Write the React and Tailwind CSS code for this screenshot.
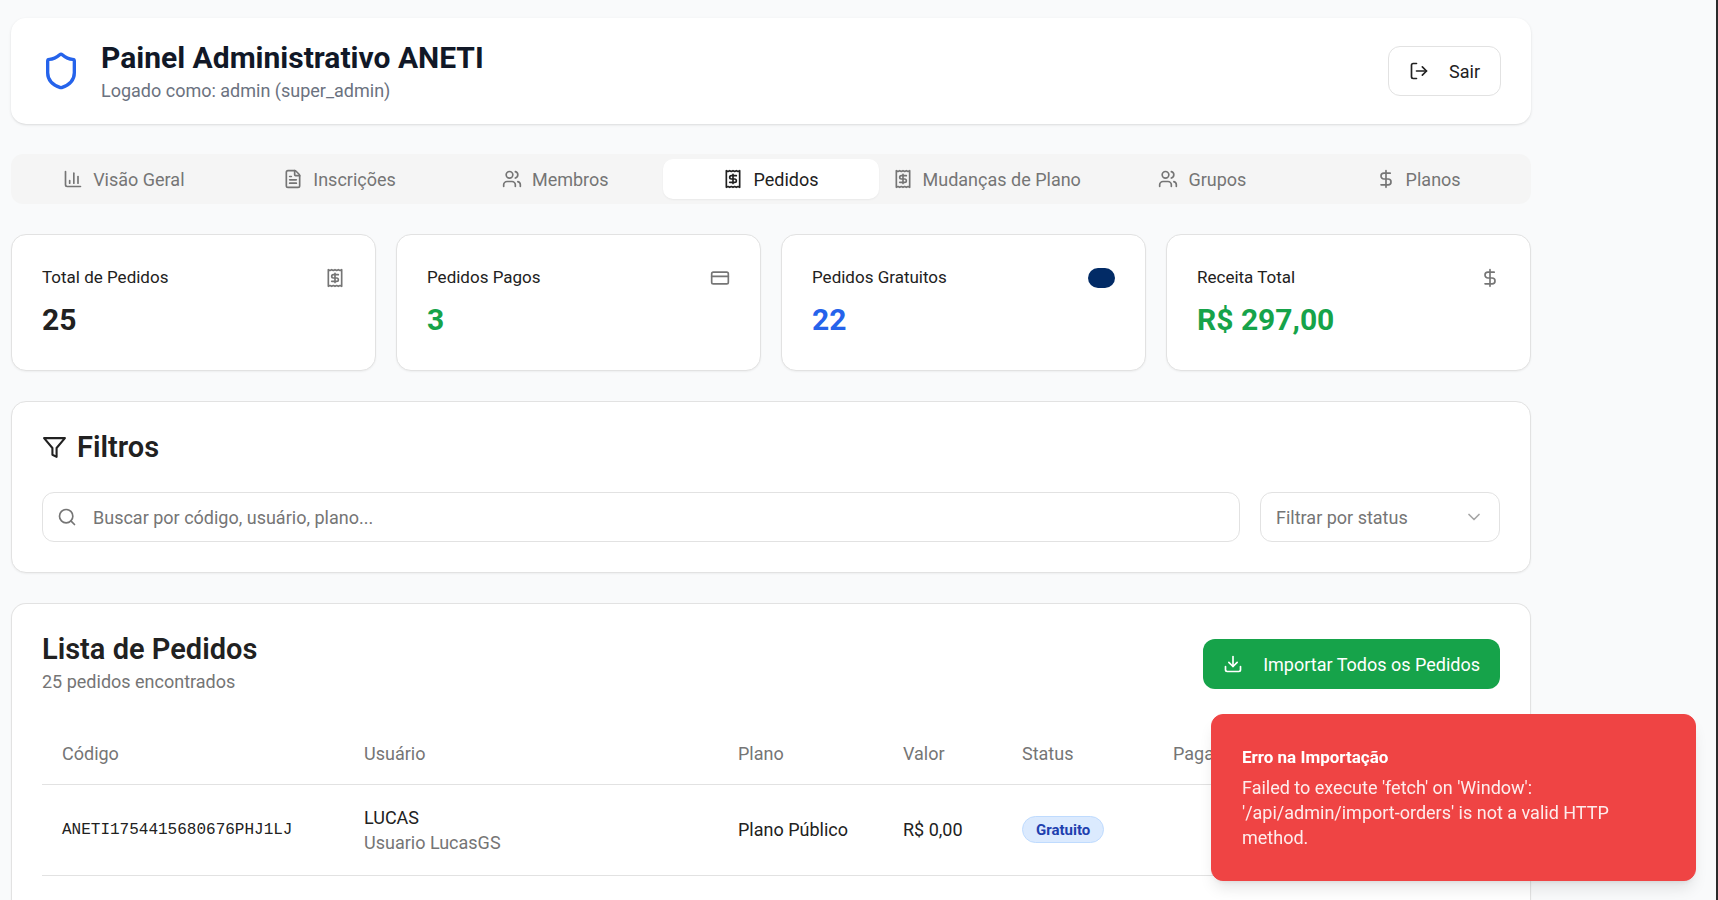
import React from "react";
import {
  Shield,
  LogOut,
  FileText,
  Users,
  Receipt,
  DollarSign,
  CreditCard,
  Search,
  ChevronDown,
} from "lucide-react";

function ChartIcon({ className }) {
  return (
    <svg viewBox="0 0 24 24" fill="none" stroke="currentColor" strokeWidth="2" strokeLinecap="round" strokeLinejoin="round" className={className} aria-hidden="true">
      <path d="M3 3v16a2 2 0 0 0 2 2h16" />
      <path d="M18 17V9" />
      <path d="M13 17V5" />
      <path d="M8 17v-3" />
    </svg>
  );
}

function FilterIcon({ className }) {
  return (
    <svg viewBox="0 0 24 24" fill="none" stroke="currentColor" strokeWidth="2" strokeLinecap="round" strokeLinejoin="round" className={className} aria-hidden="true">
      <polygon points="22 3 2 3 10 12.46 10 19 14 21 14 12.46 22 3" />
    </svg>
  );
}

function DownloadIcon({ className }) {
  return (
    <svg viewBox="0 0 24 24" fill="none" stroke="currentColor" strokeWidth="2" strokeLinecap="round" strokeLinejoin="round" className={className} aria-hidden="true">
      <path d="M21 15v4a2 2 0 0 1-2 2H5a2 2 0 0 1-2-2v-4" />
      <polyline points="7 10 12 15 17 10" />
      <line x1="12" x2="12" y1="15" y2="3" />
    </svg>
  );
}

const tabs = [
  { label: "Visão Geral", Icon: ChartIcon },
  { label: "Inscrições", Icon: FileText },
  { label: "Membros", Icon: Users },
  { label: "Pedidos", Icon: Receipt, active: true },
  { label: "Mudanças de Plano", Icon: Receipt },
  { label: "Grupos", Icon: Users },
  { label: "Planos", Icon: DollarSign },
];

const stats = [
  { label: "Total de Pedidos", value: "25", color: "text-[#212121]", Icon: Receipt },
  { label: "Pedidos Pagos", value: "3", color: "text-[#16a34a]", Icon: CreditCard },
  { label: "Pedidos Gratuitos", value: "22", color: "text-[#2563eb]" },
  { label: "Receita Total", value: "R$ 297,00", color: "text-[#16a34a]", Icon: DollarSign },
];

const columns = [
  { label: "Código", width: "w-[302px]" },
  { label: "Usuário", width: "w-[374px]" },
  { label: "Plano", width: "w-[165px]" },
  { label: "Valor", width: "w-[119px]" },
  { label: "Status", width: "w-[151px]" },
  { label: "Pagamento", width: "" },
];

function Header() {
  return (
    <header className="flex items-center justify-between rounded-[15px] bg-white px-[30px] py-5 shadow-sm">
      <div className="flex items-center gap-5">
        <Shield className="size-10 text-[#2563eb]" />
        <div>
          <h1 className="text-[30px] leading-10 font-bold text-[#111827]">Painel Administrativo ANETI</h1>
          <p className="leading-[26px] text-[#6b7280]">Logado como: admin (super_admin)</p>
        </div>
      </div>
      <button type="button" className="flex h-[50px] items-center gap-5 rounded-xl border border-[#e2e2e2] bg-white px-5">
        <LogOut className="size-5" />
        Sair
      </button>
    </header>
  );
}

function Tabs() {
  return (
    <nav role="tablist" className="grid grid-cols-7 rounded-xl bg-[#f5f5f5] p-[5px]">
      {tabs.map(({ label, Icon, active }) => (
        <button
          key={label}
          type="button"
          role="tab"
          aria-selected={!!active}
          className={
            active
              ? "flex h-10 items-center justify-center gap-2.5 rounded-[10px] bg-white whitespace-nowrap text-[#212121] shadow-xs"
              : "flex h-10 items-center justify-center gap-2.5 rounded-[10px] whitespace-nowrap text-[#757575]"
          }
        >
          <Icon className="size-5 shrink-0" />
          {label}
        </button>
      ))}
    </nav>
  );
}

function StatCard({ label, value, color, Icon }) {
  return (
    <article className="rounded-[15px] border border-[#e2e2e2] bg-white p-[30px] shadow-xs">
      <div className="flex h-[25px] items-center justify-between">
        <h3 className="text-[17px]">{label}</h3>
        {Icon ? (
          <Icon className="size-5 text-[#757575]" />
        ) : (
          <span className="h-5 w-[27px] rounded-full bg-[#022b66]" />
        )}
      </div>
      <p className={`mt-2.5 text-[30px] leading-10 font-bold ${color}`}>{value}</p>
    </article>
  );
}

function Filters() {
  return (
    <section className="rounded-[15px] border border-[#e2e2e2] bg-white p-[30px] shadow-xs">
      <h2 className="flex items-center gap-2.5 text-[29px] leading-[30px] font-semibold">
        <FilterIcon className="size-[25px]" />
        Filtros
      </h2>
      <div className="mt-[30px] flex gap-5">
        <div className="relative flex-1">
          <Search className="absolute top-[15px] left-[15px] size-5 text-[#757575]" />
          <input
            type="text"
            aria-label="Buscar pedidos"
            placeholder="Buscar por código, usuário, plano..."
            className="h-[50px] w-full rounded-xl border border-[#e2e2e2] bg-white pr-4 pl-[50px] placeholder:text-[#757575]"
          />
        </div>
        <div className="relative w-60">
          <select
            aria-label="Filtrar por status"
            className="h-[50px] w-full appearance-none rounded-xl border border-[#e2e2e2] bg-white px-[15px] text-[#757575]"
          >
            <option>Filtrar por status</option>
          </select>
          <ChevronDown className="pointer-events-none absolute top-[15px] right-4 size-5 text-[#212121] opacity-40" />
        </div>
      </div>
    </section>
  );
}

function Orders() {
  return (
    <section className="grow rounded-t-[15px] border border-b-0 border-[#e2e2e2] bg-white px-[30px] pt-[30px] shadow-xs">
      <div className="flex items-center justify-between">
        <div className="flex flex-col gap-[5px]">
          <h2 className="text-[29px] leading-[30px] font-semibold">Lista de Pedidos</h2>
          <p className="text-[#757575]">25 pedidos encontrados</p>
        </div>
        <button type="button" className="flex h-[50px] items-center gap-5 rounded-xl bg-[#16a34a] px-5 text-white">
          <DownloadIcon className="size-5" />
          Importar Todos os Pedidos
        </button>
      </div>
      <table className="mt-[30px] w-full table-fixed text-left">
        <thead>
          <tr className="h-[60px] border-b border-[#e2e2e2]">
            {columns.map(({ label, width }) => (
              <th key={label} scope="col" className={`px-5 font-normal text-[#757575] ${width}`}>
                {label}
              </th>
            ))}
          </tr>
        </thead>
        <tbody>
          <tr className="border-b border-[#e2e2e2]">
            <td className="p-5 font-['Liberation_Mono',monospace] text-base">ANETI1754415680676PHJ1LJ</td>
            <td className="p-5">
              <p>LUCAS</p>
              <p className="text-[#757575]">Usuario LucasGS</p>
            </td>
            <td className="p-5 whitespace-nowrap">Plano Público</td>
            <td className="p-5 whitespace-nowrap">R$ 0,00</td>
            <td className="p-5">
              <span className="inline-flex h-[27px] items-center rounded-full border border-[#bfdbfe] bg-[#dbeafe] px-[13px] align-middle text-[15px] leading-5 font-bold text-[#1e40af]">
                Gratuito
              </span>
            </td>
            <td className="p-5" />
          </tr>
        </tbody>
      </table>
    </section>
  );
}

function Toast() {
  return (
    <div role="alert" className="fixed right-[22px] bottom-[19px] w-[485px] rounded-xl border border-[#ef4444] bg-[#ef4444] p-[30px] pr-10 text-white shadow-lg">
      <p className="text-[17px] font-bold">Erro na Importação</p>
      <p className="mt-[5px] opacity-90">
        Failed to execute 'fetch' on 'Window': '/api/admin/import-orders' is not a valid HTTP method.
      </p>
    </div>
  );
}

export default function App() {
  return (
    <div className="flex min-h-screen border-r-2 border-[#2b2b2b] bg-[#f9fafb] font-[Roboto,sans-serif] text-[18px] leading-[25px] text-[#212121]">
      <main className="ml-[11px] flex w-full max-w-[1520px] flex-col gap-[30px] pt-[18px]">
        <Header />
        <Tabs />
        <div className="grid grid-cols-4 gap-5">
          {stats.map((stat) => (
            <StatCard key={stat.label} {...stat} />
          ))}
        </div>
        <Filters />
        <Orders />
      </main>
      <Toast />
    </div>
  );
}
